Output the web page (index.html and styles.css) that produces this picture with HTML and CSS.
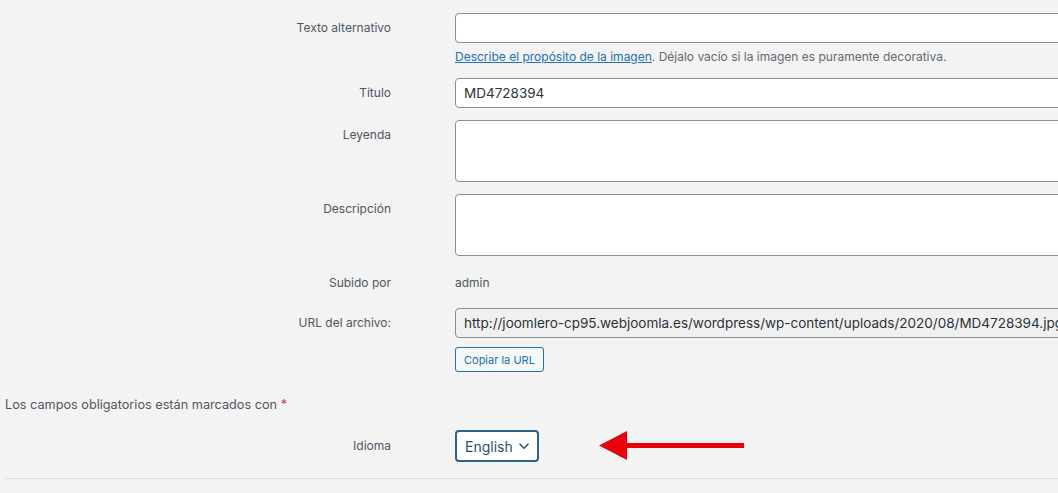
FILE: index.html
```html
<!DOCTYPE html>
<html lang="es">
<head>
    <meta charset="UTF-8">
    <meta name="viewport" content="width=device-width, initial-scale=1.0">
    <title>Detalles del adjunto</title>
    <link rel="stylesheet" href="styles.css">
</head>
<body>
    <div class="settings">
        <div class="row row-alt">
            <label class="label" for="altText">Texto alternativo</label>
            <div class="field">
                <input type="text" id="altText" class="text-input">
                <p class="help"><a href="#">Describe el propósito de la imagen</a>. Déjalo vacío si la imagen es puramente decorativa.</p>
            </div>
        </div>

        <div class="row">
            <label class="label" for="title">Título</label>
            <div class="field">
                <input type="text" id="title" class="text-input" value="MD4728394">
            </div>
        </div>

        <div class="row">
            <label class="label" for="caption">Leyenda</label>
            <div class="field">
                <textarea id="caption" class="text-area"></textarea>
            </div>
        </div>

        <div class="row">
            <label class="label" for="description">Descripción</label>
            <div class="field">
                <textarea id="description" class="text-area"></textarea>
            </div>
        </div>

        <div class="row row-uploaded">
            <span class="label">Subido por</span>
            <div class="field value">admin</div>
        </div>

        <div class="row row-url">
            <label class="label" for="fileUrl">URL del archivo:</label>
            <div class="field">
                <input type="text" id="fileUrl" class="text-input readonly" readonly value="http://joomlero-cp95.webjoomla.es/wordpress/wp-content/uploads/2020/08/MD4728394.jpg">
                <button class="copy-btn">Copiar la URL</button>
            </div>
        </div>

        <p class="required-note">Los campos obligatorios están marcados con <span class="star">*</span></p>

        <div class="row row-lang">
            <label class="label" for="lang">Idioma</label>
            <div class="field lang-field">
                <div class="select" id="lang">
                    English
                    <svg class="chevron" width="12" height="12" viewBox="0 0 12 12"><path d="M1.5 3.8 L6 8.3 L10.5 3.8" fill="none" stroke="#2f4f66" stroke-width="1.5"/></svg>
                </div>
                <svg class="arrow" width="150" height="32" viewBox="0 0 150 32">
                    <rect x="26" y="13" width="119" height="5" fill="#e8000b"/>
                    <polygon points="0,15.5 28,1 28,30" fill="#e8000b"/>
                </svg>
            </div>
        </div>

        <hr class="divider">
    </div>
</body>
</html>
```

FILE: styles.css
```css
body {
    margin: 0;
    background-color: #f3f3f3;
    font-family: Inter, "Noto Sans", Arial, sans-serif;
    color: #50575e;
    overflow: hidden;
}
.settings {
    padding: 13px 0 0 5px;
    width: 1200px;
}
.row {
    display: flex;
    gap: 64px;
    margin-bottom: 12px;
}
.row-alt {
    margin-bottom: 11px;
}
.label {
    width: 386px;
    flex-shrink: 0;
    text-align: right;
    font-size: 12px;
    line-height: 30px;
    color: #50575e;
}
.field {
    width: 640px;
}
.text-input {
    box-sizing: border-box;
    display: block;
    width: 100%;
    height: 30px;
    margin: 0;
    padding: 0 8px;
    border: 1px solid #8c8f94;
    border-radius: 4px;
    background: #fff;
    font-family: inherit;
    font-size: 13.5px;
    color: #2c3338;
}
.text-input.readonly {
    background: #f0f0f1;
}
.text-area {
    box-sizing: border-box;
    display: block;
    width: 100%;
    height: 62px;
    margin: 0;
    border: 1px solid #8c8f94;
    border-radius: 4px;
    background: #fff;
    resize: none;
}
.help {
    margin: 4px 0 0;
    font-size: 12px;
    line-height: 20px;
    color: #646970;
}
.help a {
    color: #2271b1;
}
.row-uploaded {
    margin-bottom: 10px;
}
.value {
    font-size: 12px;
    line-height: 30px;
    color: #50575e;
}
.row-url {
    margin-bottom: 23px;
}
.copy-btn {
    display: block;
    margin-top: 9px;
    height: 25px;
    padding: 0 8px;
    border: 1px solid #2271b1;
    border-radius: 3px;
    background: #f6f7f7;
    color: #2271b1;
    font-family: inherit;
    font-size: 11px;
    cursor: pointer;
}
.required-note {
    margin: 0 0 15px;
    font-size: 12.7px;
    line-height: 20px;
    color: #50575e;
}
.star {
    color: #d63638;
}
.row-lang {
    margin-bottom: 0;
}
.row-lang .label {
    line-height: 32px;
}
.lang-field {
    display: flex;
    align-items: center;
    gap: 60px;
}
.select {
    box-sizing: border-box;
    display: flex;
    align-items: center;
    gap: 5px;
    height: 32px;
    padding: 0 7px 0 8px;
    border: 2px solid #2d6384;
    border-radius: 4px;
    background: #fff;
    font-size: 14px;
    color: #2f4f66;
}
.chevron {
    flex-shrink: 0;
    display: block;
}
.arrow {
    display: block;
    flex-shrink: 0;
    margin-top: -1px;
}
.divider {
    margin: 16px 0 0;
    border: none;
    border-top: 1px solid #dcdcde;
}
```
